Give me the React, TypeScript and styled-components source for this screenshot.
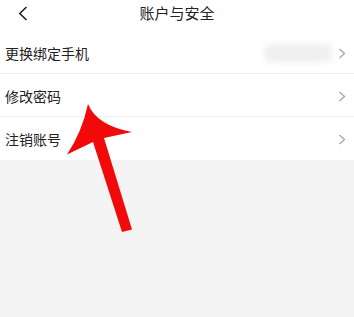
import React from 'react';
import styled, { createGlobalStyle } from 'styled-components';

const GlobalStyle = createGlobalStyle`
  html, body {
    margin: 0;
    padding: 0;
    background: #f4f4f4;
  }
  body {
    font-family: "Noto Sans CJK SC", "Noto Sans", sans-serif;
  }
`;

const Page = styled.div`
  position: relative;
  width: 354px;
  height: 317px;
  background: #f4f4f4;
  overflow: hidden;
`;

const Header = styled.header`
  height: 31px;
  background: #fff;
  display: grid;
  grid-template-columns: 40px 1fr 40px;
  align-items: center;
`;

const BackButton = styled.div`
  display: flex;
  align-items: center;
  padding-left: 18px;
  padding-bottom: 4px;
  height: 100%;
  box-sizing: border-box;
`;

const Title = styled.h1`
  margin: 0;
  text-align: center;
  font-size: 15px;
  font-weight: 400;
  color: #222;
  line-height: 1;
  padding-bottom: 7px;
`;

const List = styled.ul`
  list-style: none;
  margin: 0;
  padding: 0;
  background: #fff;
`;

const Row = styled.li<{ $last?: boolean }>`
  height: 43px;
  display: flex;
  align-items: center;
  padding: 2px 8px 0 5px;
  border-bottom: 1px solid ${p => (p.$last ? 'transparent' : '#f0f0f0')};
  box-sizing: border-box;
`;

const Label = styled.span`
  flex: 1;
  font-size: 14px;
  color: #222;
`;

const BlurredValue = styled.div`
  width: 68px;
  height: 18px;
  margin-right: 6px;
  background: #efefef;
  border-radius: 6px;
  filter: blur(3px);
`;

const Chevron = styled.svg`
  width: 8px;
  height: 11px;
  flex-shrink: 0;
`;

const ArrowLayer = styled.svg`
  position: absolute;
  top: 0;
  left: 0;
  pointer-events: none;
`;

const RightArrow = () => (
  <Chevron viewBox="0 0 8 11">
    <path d="M1.5 1 L6.5 5.5 L1.5 10" fill="none" stroke="#a8a8a8" strokeWidth="1.4" />
  </Chevron>
);

const rows = [
  { label: '更换绑定手机', masked: true },
  { label: '修改密码' },
  { label: '注销账号' },
];

export default function App() {
  return (
    <>
      <GlobalStyle />
      <Page>
        <Header>
          <BackButton>
            <svg width="10" height="15" viewBox="0 0 10 15">
              <path d="M8.5 1 L1.8 7.5 L8.5 14" fill="none" stroke="#222" strokeWidth="1.6" />
            </svg>
          </BackButton>
          <Title>账户与安全</Title>
          <span />
        </Header>
        <List>
          {rows.map((r, i) => (
            <Row key={r.label} $last={i === rows.length - 1}>
              <Label>{r.label}</Label>
              {r.masked && <BlurredValue />}
              <RightArrow />
            </Row>
          ))}
        </List>
        <ArrowLayer width="354" height="317" viewBox="0 0 354 317">
          <path
            d="M88 104 Q96.6 125.4 132 132 L104 138 L132 229.5 L122 232 L93 142 L67 154.5 Q82 132 88 104 Z"
            fill="#f20a0a"
          />
        </ArrowLayer>
      </Page>
    </>
  );
}
